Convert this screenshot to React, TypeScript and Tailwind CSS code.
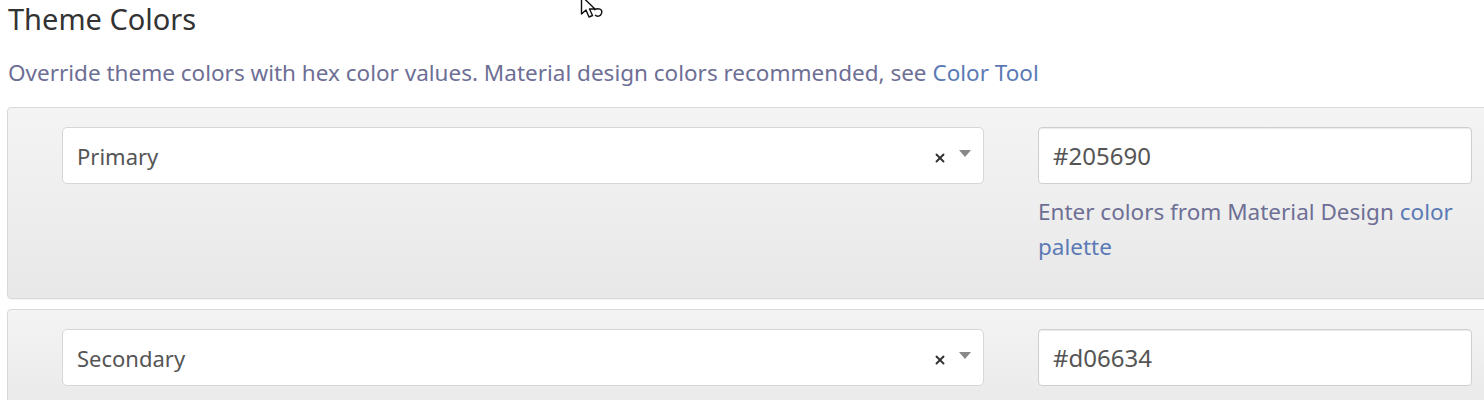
import { X } from 'lucide-react';

const font = { fontFamily: '"Noto Sans", "Open Sans", sans-serif' };

function ColorRow({ label, value, help }: { label: string; value: string; help?: boolean }) {
  return (
    <div className="w-[1520px] rounded-[4px] border border-[#d9d9d9] bg-gradient-to-b from-[#f4f4f4] to-[#e8e8e8] pl-[54px] pt-[19px] pb-[34px] shadow-[0_1px_1px_rgba(0,0,0,0.05)]">
      <div className="flex items-start gap-[54px]">
        <div className="flex h-[57px] w-[922px] items-center justify-between rounded-[5px] border border-[#d6d6d6] bg-white pl-[14px] pr-[12px]">
          <span className="text-[22px] leading-[30px] text-[#555]">{label}</span>
          <span className="flex items-center gap-[12px] pt-[4px]">
            <X className="h-[14px] w-[14px] text-[#333]" strokeWidth={3.2} />
            <span className="mb-[8px] h-0 w-0 border-x-[6px] border-t-[7px] border-x-transparent border-t-[#888]" />
          </span>
        </div>
        <div className="w-[434px]">
          <div className="flex h-[57px] items-center rounded-[4px] border border-[#cfcfcf] bg-white px-[14px] shadow-[inset_0_1px_1px_rgba(0,0,0,0.08)]">
            <span className="text-[24px] leading-[30px] text-[#555]">{value}</span>
          </div>
          {help && (
            <p className="mt-[10px] text-[22.5px] leading-[35px] text-[#6e6f95]">
              Enter colors from Material Design <span className="text-[#5b7ab5]">color palette</span>
            </p>
          )}
        </div>
      </div>
    </div>
  );
}

export default function App() {
  return (
    <div className="relative h-[400px] w-[1484px] overflow-hidden bg-white" style={font}>
      <svg className="absolute left-[580px] top-[-5px]" width="28" height="28" viewBox="0 0 28 28">
        <path d="M1.5 1 L1.5 19 L6 15 L9 22 L12.5 20.5 L9.5 14 L15 14 Z" fill="white" stroke="#111" strokeWidth="1.4" strokeLinejoin="round" />
        <path d="M14 15 C18 12.5 23 14 21.5 18.5 C20.5 21.5 17 22 15 20" fill="none" stroke="#111" strokeWidth="1.4" />
      </svg>
      <div className="px-[7px]">
        <h2 className="pl-[1px] pt-[1px] text-[29px] leading-[36px] text-[#333]">Theme Colors</h2>
        <p className="mt-[21px] pl-[1px] text-[22.5px] leading-[30px] text-[#6e6f95]">
          Override theme colors with hex color values. Material design colors recommended, see{' '}
          <span className="text-[#5b7ab5]">Color Tool</span>
        </p>
        <div className="mt-[19px] flex flex-col gap-[10px]">
          <ColorRow label="Primary" value="#205690" help />
          <ColorRow label="Secondary" value="#d06634" />
        </div>
      </div>
    </div>
  );
}
